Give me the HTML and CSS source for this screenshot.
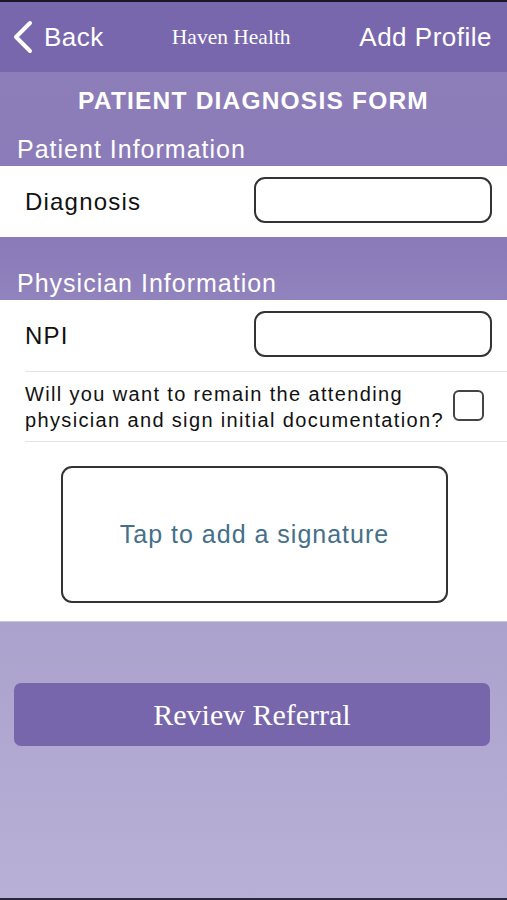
FILE: index.html
```html
<!DOCTYPE html>
<html>
<head>
<meta charset="utf-8">
<link rel="stylesheet" href="styles.css">
</head>
<body>
<div class="screen">
  <div class="topline"></div>
  <header class="nav">
    <div class="nav-back">
      <svg class="chev" width="22" height="34" viewBox="0 0 22 34"><path d="M18 3 L4 17 L18 31" fill="none" stroke="#fff" stroke-width="4" stroke-linecap="round" stroke-linejoin="round"/></svg>
      <span>Back</span>
    </div>
    <div class="nav-title">Haven Health</div>
    <div class="nav-right">Add Profile</div>
  </header>
  <div class="band band-top">
    <h1 class="form-title">PATIENT DIAGNOSIS FORM</h1>
    <div class="section-label">Patient Information</div>
  </div>
  <div class="white-block">
    <div class="field-row">
      <span class="field-label">Diagnosis</span>
      <div class="input-box"></div>
    </div>
  </div>
  <div class="band band-mid">
    <div class="section-label">Physician Information</div>
  </div>
  <div class="white-block phys">
    <div class="field-row">
      <span class="field-label">NPI</span>
      <div class="input-box"></div>
    </div>
    <div class="check-row">
      <span class="check-text">Will you want to remain the attending<br>physician and sign initial documentation?</span>
      <div class="checkbox"></div>
    </div>
    <div class="sig-wrap">
      <div class="sig-box">Tap to add a signature</div>
    </div>
  </div>
  <div class="lower">
    <div class="review-btn">Review Referral</div>
  </div>
  <div class="bottomline"></div>
</div>
</body>
</html>
```

FILE: styles.css
```css
html, body {
  margin: 0;
  padding: 0;
}
body {
  font-family: "Liberation Sans", Arial, sans-serif;
  background: #b8b0d6;
}
.screen {
  width: 507px;
  height: 900px;
  display: flex;
  flex-direction: column;
  overflow: hidden;
}
.topline {
  height: 2px;
  background: #1a1726;
}
.nav {
  height: 70px;
  background: #7867ad;
  display: flex;
  align-items: center;
  color: #fff;
}
.nav-back {
  display: flex;
  align-items: center;
  margin-left: 12px;
  font-size: 26px;
  letter-spacing: 0.5px;
  gap: 10px;
}
.chev {
  display: block;
}
.nav-title {
  font-family: "Liberation Serif", "Times New Roman", serif;
  font-size: 21.5px;
  margin-left: 68px;
}
.nav-right {
  margin-left: auto;
  margin-right: 15px;
  font-size: 26px;
  letter-spacing: 0.5px;
}
.band {
  background: linear-gradient(#8d7eb9, #8b7bb8);
  color: #fff;
  display: flex;
  flex-direction: column;
}
.band-top {
  height: 94px;
}
.form-title {
  margin: 0;
  font-size: 24.5px;
  letter-spacing: 1.2px;
  font-weight: bold;
  text-align: center;
  height: 58px;
  line-height: 58px;
}
.section-label {
  font-size: 25px;
  letter-spacing: 1px;
  padding-left: 17px;
  line-height: 34px;
  margin-top: auto;
}
.band-mid {
  height: 63px;
  background: linear-gradient(#8a7ab8, #9183bd);
}
.white-block {
  background: #fff;
  display: flex;
  flex-direction: column;
}
.field-row {
  height: 71px;
  display: flex;
  align-items: center;
  padding-left: 25px;
  padding-right: 15px;
}
.field-label {
  font-size: 24px;
  letter-spacing: 1.2px;
  color: #111;
  flex: 1;
}
.input-box {
  width: 234px;
  height: 42px;
  border: 2px solid #333;
  border-radius: 11px;
  margin-top: -3px;
}
.phys {
  height: 321px;
}
.check-row {
  margin-left: 25px;
  border-top: 1px solid #e4e4e4;
  border-bottom: 1px solid #e4e4e4;
  height: 69px;
  display: flex;
  align-items: center;
  padding-right: 23px;
}
.check-text {
  font-size: 20px;
  letter-spacing: 1.35px;
  line-height: 26px;
  color: #111;
  flex: 1;
  white-space: nowrap;
}
.checkbox {
  width: 27px;
  height: 27px;
  border: 2px solid #444;
  border-radius: 6px;
  margin-top: -2px;
}
.sig-wrap {
  display: flex;
  padding-top: 24px;
  padding-left: 61px;
}
.sig-box {
  width: 383px;
  height: 133px;
  border: 2px solid #333;
  border-radius: 11px;
  display: flex;
  align-items: center;
  justify-content: center;
  font-size: 25px;
  letter-spacing: 1px;
  color: #44708a;
}
.lower {
  flex: 1;
  background: linear-gradient(#aba2cd, #b8b0d6);
  border-top: 1px solid #c9c3e0;
  padding: 61px 17px 0 14px;
}
.review-btn {
  height: 63px;
  background: #7766ab;
  border-radius: 7px;
  color: #fff;
  display: flex;
  align-items: center;
  justify-content: center;
  font-family: "Liberation Serif", "Times New Roman", serif;
  font-size: 30px;
}
.bottomline {
  height: 2px;
  background: #2a2640;
}
```
